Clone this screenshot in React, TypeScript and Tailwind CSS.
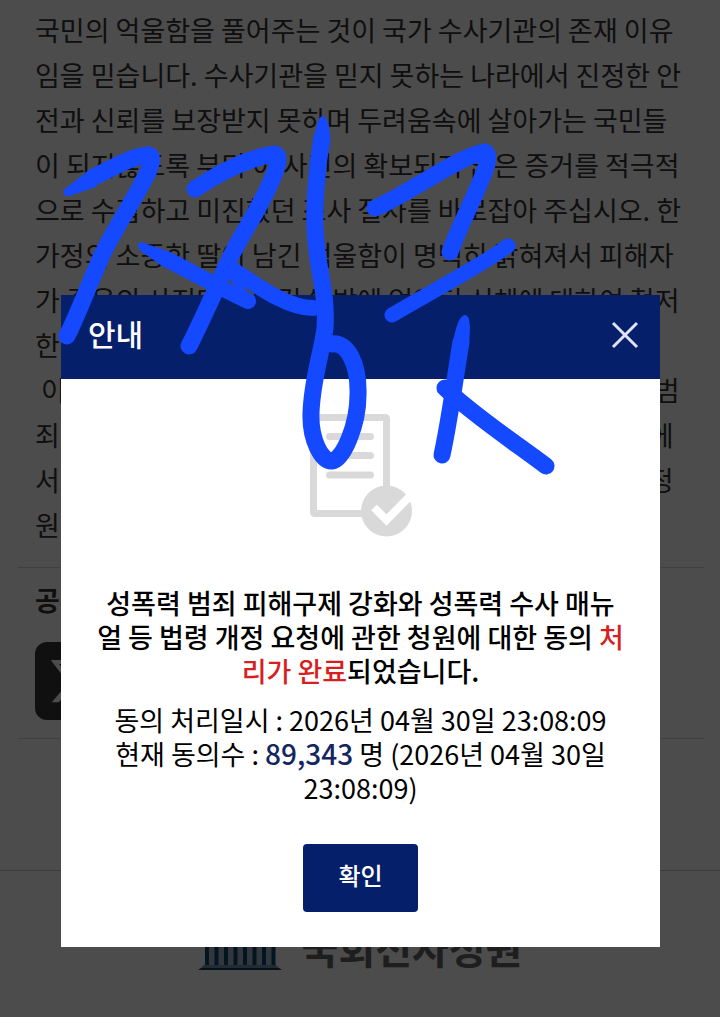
import React, { useState } from 'react';

const petitionLines: string[] = [
  '국민의 억울함을 풀어주는 것이 국가 수사기관의 존재 이유',
  '임을 믿습니다. 수사기관을 믿지 못하는 나라에서 진정한 안',
  '전과 신뢰를 보장받지 못하며 두려움속에 살아가는 국민들',
  '이 되지않도록 부디 이 사건의 확보되지 않은 증거를 적극적',
  '으로 수집하고 미진했던 조사 절차를 바로잡아 주십시오. 한',
  '가정의 소중한 딸이 남긴 억울함이 명백히 밝혀져서 피해자',
  '가 죽음의 사진만을 남길수 밖에 없었던 신체에 대하여 철저',
  '한 수사를 요청드립니다.',
  ' 이번 청원을 통해서 억울한 죽음이 밝혀지기를 바라오니 범',
  '죄의 피해자를 보호하고 성폭력 수사 매뉴얼과 관련 법령에',
  '서도 부족한 부분들이 개선되도록 더 강력히 요청하며 개정',
  '원합니다.',
];

const XLogo: React.FC = () => (
  <svg viewBox="0 0 24 24" className="w-[52px] h-[52px]" fill="#fff" aria-hidden="true">
    <path d="M18.24 2.25h3.31l-7.23 8.26 8.5 11.24h-6.66l-5.21-6.82-5.97 6.82H1.68l7.73-8.84L1.25 2.25h6.83l4.71 6.23zm-1.16 17.52h1.83L7.08 4.13H5.12z" />
  </svg>
);

const AssemblyLogo: React.FC = () => (
  <svg viewBox="0 0 84 56" className="w-[84px] h-14" aria-hidden="true">
    <path d="M42 0C26 0 14 8 11 18h62C70 8 58 0 42 0z" fill="#2467a0" />
    <rect x="3" y="19" width="78" height="6" fill="#2467a0" />
    <rect x="8" y="25" width="69" height="25" fill="#a5b8c8" />
    <path
      d="M9 25v25M18.500 25v25M28 25v25M37.500 25v25M47 25v25M56.500 25v25M66 25v25M75.500 25v25"
      stroke="#104570"
      strokeWidth="4"
    />
    <path d="M6 50h72l3 3H3z" fill="#6f8fae" />
    <path d="M3 53h78l3 2H0z" fill="#123d66" />
  </svg>
);

const DocumentCheckIcon: React.FC = () => (
  <svg viewBox="0 0 103 123" className="w-[103px] h-[123px]" fill="none" aria-hidden="true">
    <rect x="4.500" y="3.500" width="73" height="96" rx="1" stroke="#d9d9d9" strokeWidth="7" />
    <path d="M20.500 22.500h41M20.500 41.500h41M20.500 61h41" stroke="#d9d9d9" strokeWidth="7" strokeLinecap="round" />
    <circle cx="77.500" cy="97" r="25.500" fill="#d9d9d9" />
    <path d="M65 93.500l12.500 12.500L101 82" stroke="#fff" strokeWidth="8" />
  </svg>
);

// Handwritten memo over the whole screen
const PenMarks: React.FC = () => (
  <svg
    viewBox="0 0 720 1017"
    className="pointer-events-none absolute left-0 top-0 w-full"
    fill="none"
    stroke="#1549ff"
    strokeWidth="17"
    strokeLinecap="round"
    strokeLinejoin="round"
    aria-hidden="true"
  >
    <path d="M92 178C114 167 132 156 149 155Q154 156 149 170C139 192 118 223 102 255C88 287 78 314 67 336" />
    <path d="M64 194Q62 190 66 188L88 171L96 187L69 196Q66 197 64 194z" fill="#1549ff" stroke="none" />
    <path d="M166 259C192 272 218 287 248 301" strokeWidth="16" />
    <path d="M138 245Q138 241 144 243L170 252L162 266L142 252Q138 249 138 245z" fill="#1549ff" stroke="none" />
    <path d="M195 189C220 172 247 158 275 154Q281 156 275 172C263 204 244 230 232 254C217 286 203 319 189 346" />
    <path d="M230 268C250 280 284 308 313 308" strokeWidth="16" />
    <path d="M228 268L248 301" strokeWidth="8" />
    <path d="M322 137C316 172 313 215 316 242C319 275 327 294 325 328C322 352 312 380 311 413C310 440 322 462 332 461C343 460 358 425 358 395C359 363 347 342 332 344" />
    <path d="M314 145Q316 116 323 116Q330 117 330 145z" fill="#1549ff" stroke="none" />
    <path d="M375 208C407 195 455 158 484 152Q491 153 485 170C476 195 461 222 450 252" />
    <path d="M508 246C480 266 440 287 392 315" strokeWidth="15" />
    <path d="M461 342C455 378 450 418 442 455" />
    <path d="M453 342Q458 315 465 315Q472 315 469 343z" fill="#1549ff" stroke="none" />
    <path d="M445 388C473 415 517 444 546 466" />
  </svg>
);

const PetitionPage: React.FC = () => (
  <div className="bg-white text-[#333]">
    <section className="overflow-hidden pl-[35px] pt-[7px] pb-5">
      {petitionLines.map((line) => (
        <p key={line} className="whitespace-pre text-[27px] leading-[45px]">
          {line}
        </p>
      ))}
    </section>

    <section className="ml-[18px] mr-4 border-y border-[#d5d5d5] pl-[17px] pt-3 pb-[18px]">
      <h2 className="text-[27px] leading-10 font-bold">공유하기</h2>
      <a
        href="#share"
        aria-label="X 공유"
        className="mt-[22px] flex w-[78px] h-[78px] items-center justify-center rounded-xl bg-[#363636]"
      >
        <XLogo />
      </a>
    </section>

    <footer className="mt-[131px] flex items-start justify-center gap-5 border-t border-[#c8c8c8] pt-11 pb-12">
      <AssemblyLogo />
      <span className="text-[40px] leading-[64px] font-bold text-[#666]">국회전자청원</span>
    </footer>
  </div>
);

interface NoticeDialogProps {
  onClose: () => void;
}

const NoticeDialog: React.FC<NoticeDialogProps> = ({ onClose }) => (
  <div className="absolute inset-0 bg-black/70 px-[60px] pt-[295px]">
    <div role="dialog" aria-modal="true" aria-labelledby="notice-title" className="ml-px bg-white text-black">
      <header className="flex h-[84px] items-center justify-between bg-[#061f6b] pl-[27px] pr-[21px]">
        <h1 id="notice-title" className="pb-2 text-[30px] leading-10 font-medium text-white">
          안내
        </h1>
        <button type="button" aria-label="닫기" onClick={onClose} className="pb-1">
          <svg viewBox="0 0 28 28" className="w-7 h-7" stroke="#e0e4f6" strokeWidth="3" aria-hidden="true">
            <path d="M2 2l24 24M26 2L2 26" />
          </svg>
        </button>
      </header>

      <div className="flex flex-col items-center px-9 py-[35px] text-center text-[27px] leading-[34px]">
        <DocumentCheckIcon />
        <p className="mt-[49px] font-medium">
          성폭력 범죄 피해구제 강화와 성폭력 수사 매뉴
          <br />얼 등 법령 개정 요청에 관한 청원에 대한 동의 <strong className="font-medium text-[#d81f1f]">처
          <br />리가 완료</strong>되었습니다.
        </p>
        <p className="mt-[15px]">
          동의 처리일시 : 2026년 04월 30일 23:08:09
          <br />
          현재 동의수 : <span className="text-[28px] leading-none font-medium text-[#14265f]">89,343</span> 명 (2026년 04월 30일
          <br />
          23:08:09)
        </p>
        <button
          type="button"
          onClick={onClose}
          className="mt-[39px] h-[68px] w-[115px] rounded bg-[#061f6b] pb-1.5 text-2xl font-medium text-white"
        >
          확인
        </button>
      </div>
    </div>
  </div>
);

const App: React.FC = () => {
  const [open, setOpen] = useState(true);

  return (
    <div className="relative min-h-screen overflow-hidden font-['Noto_Sans_CJK_KR','Noto_Sans',sans-serif]">
      <PetitionPage />
      {open && <NoticeDialog onClose={() => setOpen(false)} />}
      <PenMarks />
    </div>
  );
};

export default App;
